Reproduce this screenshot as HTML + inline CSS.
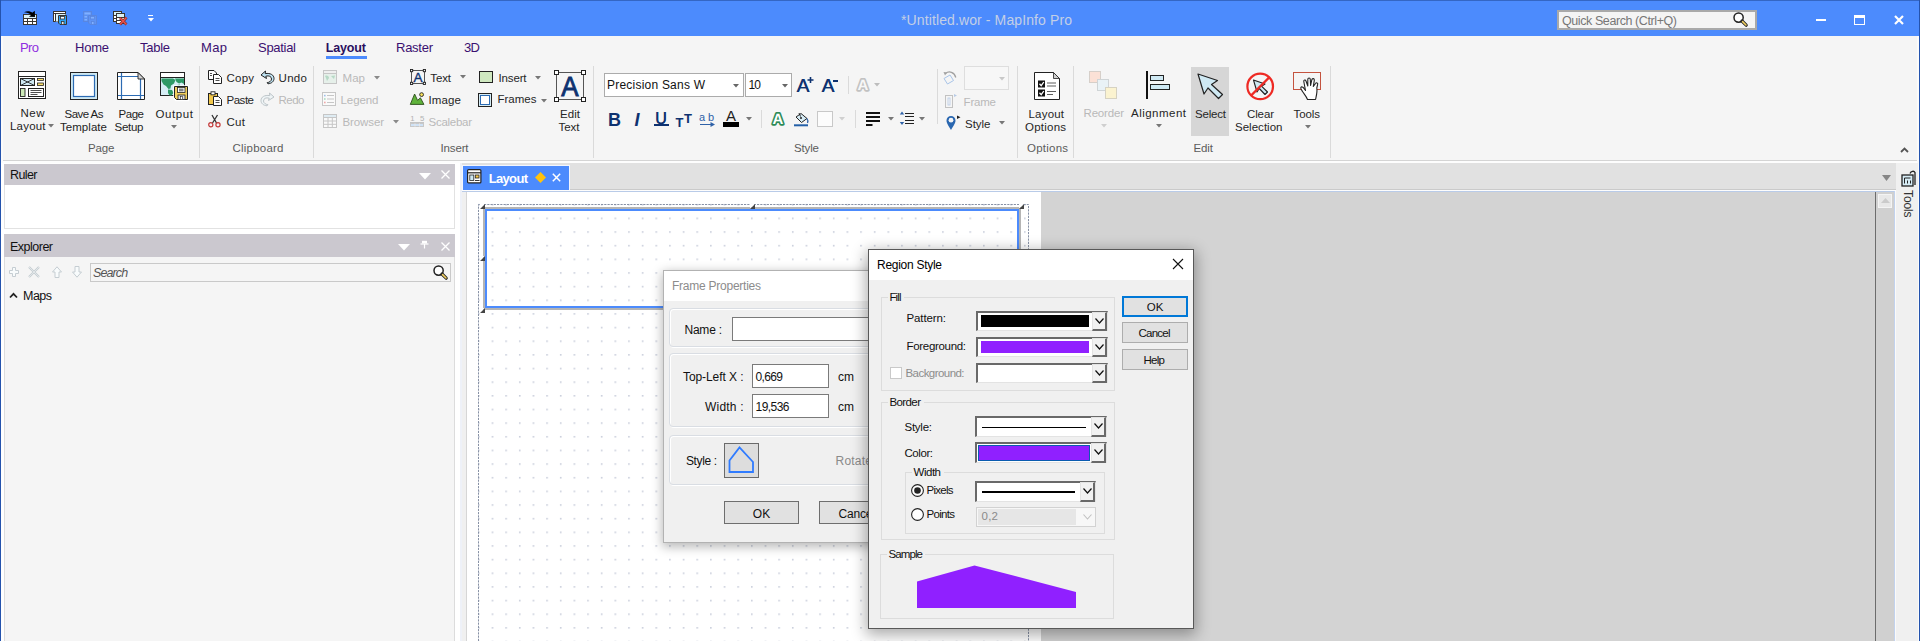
<!DOCTYPE html>
<html lang="en"><head><meta charset="utf-8"><title>*Untitled.wor - MapInfo Pro</title>
<style>
html,body{margin:0;padding:0;}
body{width:1920px;height:641px;overflow:hidden;position:relative;background:#f0f0f0;font-family:"Liberation Sans",Arial,sans-serif;}
.a{position:absolute;box-sizing:border-box;}
.t{position:absolute;white-space:pre;}
svg{overflow:visible;}
</style></head><body>
<div class="a " style="left:0px;top:0px;width:1920px;height:641px;background:#f0f0f0;"></div>
<div class="a " style="left:0px;top:0px;width:1920px;height:36px;background:#4c8bfd;"></div>
<div class="a " style="left:0px;top:0px;width:1920px;height:1px;background:#3466c4;"></div>
<div class="a " style="left:0px;top:36px;width:1920px;height:124px;background:#f5f5f5;"></div>
<div class="a " style="left:0px;top:160px;width:1920px;height:1px;background:#d4d4d4;"></div>
<div class="a " style="left:0px;top:161px;width:1920px;height:2px;background:#fdfdfd;"></div>
<div class="a " style="left:0px;top:0px;width:1px;height:641px;background:#2453ad;"></div>
<div class="a " style="left:1px;top:36px;width:2px;height:605px;background:#fbfbfb;"></div>
<div class="a " style="left:1919px;top:0px;width:1px;height:641px;background:#2453ad;"></div>
<div class="a " style="left:1917px;top:36px;width:2px;height:605px;background:#fbfbfb;"></div>
<span class="t" style="left:901.00px;top:13.00px;font-size:14px;line-height:14px;color:#c3cfe6;letter-spacing:0.113px;">*Untitled.wor - MapInfo Pro</span>
<div class="a " style="left:1557px;top:10px;width:200px;height:20px;background:#f4f4f4;border:2px solid #a9a9a9;"></div>
<span class="t" style="left:1562.00px;top:14.75px;font-size:12.5px;line-height:12.5px;color:#777;letter-spacing:-0.414px;">Quick Search (Ctrl+Q)</span>
<svg class="a" style="left:1733px;top:12px;" width="15" height="15" viewBox="0 0 15 15"><circle cx="5.6" cy="5.6" r="4.6" fill="#fff" stroke="#222" stroke-width="1.5"/><path d="M9 9L13.2 13.2" stroke="#222" stroke-width="3.2" stroke-linecap="round"/><path d="M9.6 9.6L13 13" stroke="#f2d060" stroke-width="1.6" stroke-linecap="round"/></svg>
<div class="a " style="left:1816px;top:19px;width:10px;height:2px;background:#fff;"></div>
<div class="a " style="left:1854px;top:15px;width:11px;height:10px;border:1px solid #fff;border-top:3px solid #fff;"></div>
<svg class="a" style="left:1894px;top:15px;" width="10" height="10" viewBox="0 0 10 10"><path d="M1 1L9 9M9 1L1 9" stroke="#fff" stroke-width="2.2"/></svg>
<svg class="a" style="left:22px;top:10px;" width="16" height="16" viewBox="0 0 16 16"><rect x="1.500" y="4.500" width="13" height="10" fill="#fff" stroke="#3a3530"/><rect x="2" y="5" width="12" height="3" fill="#d9f1f8"/><path d="M1.500 8.500H14.500M1.500 11.500H14.500M5.500 8.500V14.500M10.500 8.500V14.500" stroke="#3a3530"/><path d="M2 2.200C5 .8 8.500 1 10.200 2.800L12.800 .8L13 7L7 6.800L9 5C7.500 3 4.500 2.300 2 2.200Z" fill="#000"/></svg>
<svg class="a" style="left:52px;top:10px;" width="16" height="16" viewBox="0 0 16 16"><rect x="1.500" y="1.500" width="12" height="10" fill="#fff" stroke="#3a3530"/><path d="M1.500 3.500H13.500" stroke="#3a3530"/><rect x="3.500" y="4" width="10" height="7.500" fill="#d9f1f8"/><path d="M3.500 3.500V11.500" stroke="#3a3530"/><path d="M6.500 5.500H14.500V14.500H8L6.500 13Z" fill="#2ea3f2" stroke="#3a3530"/><rect x="8.500" y="6.500" width="4" height="2.500" fill="#fff" stroke="#3a3530" stroke-width=".8"/><rect x="9.500" y="11.500" width="2.500" height="3" fill="#e8e8e8" stroke="#3a3530" stroke-width=".8"/></svg>
<svg class="a" style="left:82px;top:10px;" width="16" height="16" viewBox="0 0 16 16"><rect x="1.500" y="1.500" width="8" height="10" fill="#5a90f2" stroke="#5886e0"/><rect x="2.500" y="2.500" width="6" height="2" fill="#80b0ff"/><rect x="2.500" y="6" width="2.500" height="1.500" fill="#80b0ff"/><rect x="2.500" y="9" width="2.500" height="1.500" fill="#80b0ff"/><path d="M6.500 5.500H14.500V14.500H8L6.500 13Z" fill="#5e93f4" stroke="#5886e0"/><rect x="8.500" y="6.500" width="4" height="2.500" fill="#80b0ff" stroke="#5886e0" stroke-width=".8"/><rect x="9.500" y="11.500" width="2.500" height="3" fill="#80b0ff" stroke="#5886e0" stroke-width=".8"/></svg>
<svg class="a" style="left:112px;top:10px;" width="16" height="16" viewBox="0 0 16 16"><rect x="1.500" y="1.500" width="8" height="10" fill="#fff" stroke="#3a3530"/><rect x="2" y="2" width="7" height="3" fill="#d9f1f8"/><path d="M1.500 5.500H9.500M1.500 8.500H9.500M4.500 5.500V11.500" stroke="#3a3530"/><rect x="4.500" y="3.500" width="8" height="10" fill="#fff" stroke="#3a3530"/><rect x="5" y="4" width="7" height="3" fill="#d9f1f8"/><path d="M4.500 7.500H12.500M4.500 10.500H12.500" stroke="#3a3530"/><path d="M8 8L14.500 14.500M14.500 7.500L8 14.500" stroke="#7a2a26" stroke-width="2.600"/><path d="M8 8L14.500 14.500M14.500 7.500L8 14.500" stroke="#e8524c" stroke-width="1.500"/></svg>
<div class="a " style="left:147.7px;top:15px;width:5.6px;height:1.2px;background:#fff;"></div>
<svg class="a" style="left:147.5px;top:18px;" width="6" height="3.5" viewBox="0 0 6 3.5"><path d="M0 0H6L3 3.500Z" fill="#fff"/></svg>
<span class="t" style="left:20.00px;top:41.00px;font-size:13px;line-height:13px;color:#8f2de0;letter-spacing:-0.614px;">Pro</span>
<span class="t" style="left:75.00px;top:41.00px;font-size:13px;line-height:13px;color:#3b1070;letter-spacing:-0.228px;">Home</span>
<span class="t" style="left:140.00px;top:41.00px;font-size:13px;line-height:13px;color:#3b1070;letter-spacing:-0.271px;">Table</span>
<span class="t" style="left:201.00px;top:41.00px;font-size:13px;line-height:13px;color:#3b1070;letter-spacing:0.357px;">Map</span>
<span class="t" style="left:258.00px;top:41.00px;font-size:13px;line-height:13px;color:#3b1070;letter-spacing:-0.292px;">Spatial</span>
<span class="t" style="left:325.80px;top:41.75px;font-size:12.5px;line-height:12.5px;color:#2a0f5e;letter-spacing:-0.155px;font-weight:bold;">Layout</span>
<div class="a " style="left:326px;top:56px;width:41px;height:3px;background:#4c8bfd;"></div>
<span class="t" style="left:396.00px;top:41.00px;font-size:13px;line-height:13px;color:#3b1070;letter-spacing:-0.257px;">Raster</span>
<span class="t" style="left:464.00px;top:41.00px;font-size:13px;line-height:13px;color:#3b1070;letter-spacing:-0.614px;">3D</span>
<svg class="a" style="left:1900px;top:147px;" width="9" height="6" viewBox="0 0 9 6"><path d="M1 5L4.5 1.5L8 5" fill="none" stroke="#555" stroke-width="1.8"/></svg>
<svg class="a" style="left:18px;top:71px;" width="28" height="28" viewBox="0 0 28 28"><rect x=".5" y=".5" width="27" height="27" fill="#fff" stroke="#222"/><path d="M.5 5.500H27.500" stroke="#222"/>
<rect x="2.500" y="7.500" width="14" height="7" fill="#cfe9f3" stroke="#222"/><path d="M2.500 7.500L16.500 14.500M16.500 7.500L2.500 14.500" stroke="#222" stroke-width=".9"/>
<rect x="19.500" y="7.500" width="6" height="2" fill="#fadf6e" stroke="#222" stroke-width=".8"/><rect x="19.500" y="12" width="6" height="2.500" fill="#fadf6e" stroke="#222" stroke-width=".8"/>
<rect x="2.500" y="17.500" width="4.500" height="8" fill="#cdeab8" stroke="#222" stroke-width=".9"/>
<rect x="10.500" y="17.500" width="15" height="8" fill="#fff" stroke="#222"/><path d="M12.500 19.500H23.500M12.500 21.500H23.500M12.500 23.500H19.500" stroke="#222" stroke-width=".8"/></svg>
<span class="t" style="left:20.50px;top:108.25px;font-size:11.5px;line-height:11.5px;color:#1e1e1e;letter-spacing:0.483px;">New</span>
<span class="t" style="left:10.00px;top:121.25px;font-size:11.5px;line-height:11.5px;color:#1e1e1e;letter-spacing:0.195px;">Layout</span>
<svg class="a" style="left:47.5px;top:124.25px;" width="6" height="3.5" viewBox="0 0 6 3.5"><path d="M0 0H6L3 3.5Z" fill="#777"/></svg>
<svg class="a" style="left:70px;top:72px;" width="28" height="28" viewBox="0 0 28 28"><rect x=".5" y=".5" width="27" height="27" fill="#cfe9f3" stroke="#222"/><rect x="3.5" y="3.5" width="21" height="21" fill="#fff" stroke="#2c6bb3" stroke-width="1.2"/></svg>
<span class="t" style="left:64.50px;top:109.25px;font-size:11.5px;line-height:11.5px;color:#1e1e1e;letter-spacing:-0.532px;">Save As</span>
<span class="t" style="left:60.00px;top:121.75px;font-size:11.5px;line-height:11.5px;color:#1e1e1e;letter-spacing:0.048px;">Template</span>
<svg class="a" style="left:117px;top:72px;" width="28" height="28" viewBox="0 0 28 28"><path d="M.5 .5H21L27.5 7V27.5H.5Z" fill="#fff"/><path d="M4.5 1V27M23.5 7V27M1 4.5H21M1 23.5H27" stroke="#2c6bb3" stroke-width="1.2"/><path d="M.5 .5H21L27.5 7V27.5H.5Z" fill="none" stroke="#222"/><path d="M21 .5V7H27.5Z" fill="#d4d4d4" stroke="#222" stroke-width=".9" stroke-linejoin="round"/></svg>
<span class="t" style="left:118.50px;top:109.25px;font-size:11.5px;line-height:11.5px;color:#1e1e1e;letter-spacing:-0.451px;">Page</span>
<span class="t" style="left:114.50px;top:121.75px;font-size:11.5px;line-height:11.5px;color:#1e1e1e;letter-spacing:-0.262px;">Setup</span>
<svg class="a" style="left:160px;top:72px;" width="29" height="29" viewBox="0 0 29 29"><rect x=".5" y=".5" width="24" height="23" fill="#d6eef5" stroke="#222"/><rect x="1" y="1" width="23" height="4.500" fill="#fff"/><path d="M.5 5.500H24.500" stroke="#222"/>
<path d="M1.500 6.500H13L15.500 8L14 11.500L11 13.500L10.500 16.500L8.500 17L6 14L3.500 12.500L1.500 9Z" fill="#2e9a66"/><path d="M15 6.500H24V12L21.500 10.500L19 11.500L16.500 10Z" fill="#2e9a66"/><path d="M8 17.500L12 18L13.500 21L11.500 23.500H9.500L8 21Z" fill="#2e9a66"/><path d="M17 13L20 12.500L19.500 14.500Z" fill="#2e9a66"/>
<path d="M14 14H28.500V28.500H16L14 26.500Z" fill="#fff" stroke="#fff" stroke-width="1.500"/>
<path d="M14.500 14.500H27.500V27.500H16.500L14.500 25.500Z" fill="#f2d060" stroke="#222"/><rect x="17.500" y="15.500" width="7.500" height="5" fill="#fff" stroke="#222" stroke-width=".8"/><path d="M19 17.200H23.500M19 18.800H23.500" stroke="#222" stroke-width=".8"/><rect x="18" y="23" width="7" height="4.500" fill="#ddd" stroke="#222" stroke-width=".8"/><rect x="20.500" y="24.500" width="2" height="3" fill="#fff" stroke="#222" stroke-width=".6"/></svg>
<span class="t" style="left:155.50px;top:109.25px;font-size:11.5px;line-height:11.5px;color:#1e1e1e;letter-spacing:0.595px;">Output</span>
<svg class="a" style="left:170.5px;top:124.75px;" width="6" height="3.5" viewBox="0 0 6 3.5"><path d="M0 0H6L3 3.5Z" fill="#777"/></svg>
<span class="t" style="left:88.00px;top:143.25px;font-size:11.5px;line-height:11.5px;color:#5c5c5c;letter-spacing:-0.117px;">Page</span>
<div class="a " style="left:199px;top:66px;width:1px;height:92px;background:#dadada;"></div>
<svg class="a" style="left:208px;top:70px;" width="14" height="14" viewBox="0 0 14 14"><path d="M.5 .5H6L8.5 3V9.5H.5Z" fill="#fff" stroke="#222"/><path d="M5.5 4.5H10.5L13.5 7.5V13.5H5.5Z" fill="#fff" stroke="#222"/><path d="M7.5 8.5H11.5M7.5 10.5H11.5M2 3.5H4M2 5.5H4" stroke="#222" stroke-width=".8"/></svg>
<span class="t" style="left:226.50px;top:73.25px;font-size:11.5px;line-height:11.5px;color:#262626;letter-spacing:0.220px;">Copy</span>
<svg class="a" style="left:260px;top:70px;" width="15" height="14" viewBox="0 0 15 14"><path d="M5.5 1L1 5L6.5 8.5L5.8 6.2C9 5.2 11.5 6.5 11.5 9C11.5 11 9.5 12.3 7 12.8L8 13.8C11.5 13.5 14 11.5 14 8.5C14 5 10.5 2.8 5.2 3.6Z" fill="#bfe3f2" stroke="#222" stroke-width="1" stroke-linejoin="round"/></svg>
<span class="t" style="left:278.50px;top:73.25px;font-size:11.5px;line-height:11.5px;color:#262626;letter-spacing:0.334px;">Undo</span>
<svg class="a" style="left:208px;top:91px;" width="14" height="15" viewBox="0 0 14 15"><rect x=".5" y="2.5" width="9" height="11" fill="#f2c84b" stroke="#222"/><rect x="3" y=".8" width="4" height="3" fill="#fff" stroke="#222" stroke-width=".9"/><path d="M5.5 5.5H10.5L13.5 8.5V14.5H5.5Z" fill="#fff" stroke="#222"/><path d="M7.5 9.5H11.5M7.5 11.5H11.5" stroke="#222" stroke-width=".8"/></svg>
<span class="t" style="left:226.50px;top:95.25px;font-size:11.5px;line-height:11.5px;color:#262626;letter-spacing:-0.476px;">Paste</span>
<svg class="a" style="left:260px;top:92px;" width="15" height="14" viewBox="0 0 15 14"><path d="M9.5 1L14 5L8.5 8.5L9.2 6.2C6 5.2 3.5 6.5 3.5 9C3.5 11 5.5 12.3 8 12.8L7 13.8C3.500 13.5 1 11.5 1 8.500C1 5 4.500 2.800 9.800 3.600Z" fill="#eef4f6" stroke="#bcc4c8" stroke-width="1" stroke-linejoin="round"/></svg>
<span class="t" style="left:278.50px;top:95.25px;font-size:11.5px;line-height:11.5px;color:#b9b9b9;letter-spacing:-0.499px;">Redo</span>
<svg class="a" style="left:208px;top:114px;" width="13" height="14" viewBox="0 0 13 14"><path d="M4 1L8.5 9M9.5 1L4.5 9" stroke="#333" stroke-width="1.3" fill="none"/><circle cx="2.8" cy="10.8" r="2.1" fill="none" stroke="#c43b3b" stroke-width="1.2"/><circle cx="10" cy="10.8" r="2.1" fill="none" stroke="#c43b3b" stroke-width="1.2"/></svg>
<span class="t" style="left:226.50px;top:117.25px;font-size:11.5px;line-height:11.5px;color:#262626;letter-spacing:0.303px;">Cut</span>
<span class="t" style="left:232.50px;top:143.25px;font-size:11.5px;line-height:11.5px;color:#5c5c5c;letter-spacing:0.223px;">Clipboard</span>
<div class="a " style="left:313px;top:66px;width:1px;height:92px;background:#dadada;"></div>
<svg class="a" style="left:323px;top:70px;" width="14" height="14" viewBox="0 0 14 14"><rect x=".5" y=".5" width="13" height="13" fill="#e6f0ea" stroke="#c6c6c6"/><rect x=".5" y=".5" width="13" height="3" fill="#efefef" stroke="#c6c6c6"/><path d="M2 6C4 5 6 6 6 8L4 11L3 8Z M8 6L12 5.500L11 9Z" fill="#b7d9c6"/></svg>
<span class="t" style="left:342.50px;top:73.25px;font-size:11.5px;line-height:11.5px;color:#b9b9b9;letter-spacing:0.066px;">Map</span>
<svg class="a" style="left:374px;top:75.75px;" width="6" height="3.5" viewBox="0 0 6 3.5"><path d="M0 0H6L3 3.5Z" fill="#8a8a8a"/></svg>
<svg class="a" style="left:322px;top:92px;" width="14" height="14" viewBox="0 0 14 14"><rect x=".5" y=".5" width="13" height="13" fill="#fafafa" stroke="#c6c6c6"/><path d="M5 3.500H12M5 7H12M5 10.500H12" stroke="#c6c6c6"/><rect x="2" y="2.800" width="1.600" height="1.600" fill="#9fc0ea"/><rect x="2" y="6.200" width="1.600" height="1.600" fill="#a8dcc0"/><rect x="2" y="9.700" width="1.600" height="1.600" fill="#f0a8a8"/></svg>
<span class="t" style="left:340.50px;top:95.25px;font-size:11.5px;line-height:11.5px;color:#b9b9b9;letter-spacing:-0.075px;">Legend</span>
<svg class="a" style="left:323px;top:114px;" width="14" height="14" viewBox="0 0 14 14"><rect x=".5" y=".5" width="13" height="13" fill="#fafafa" stroke="#c6c6c6"/><rect x=".5" y=".5" width="13" height="3" fill="#dfecf3" stroke="#c6c6c6"/><path d="M.5 7H13.500M.5 10.300H13.500M5 3.500V13.500M9.300 3.500V13.500" stroke="#c6c6c6"/></svg>
<span class="t" style="left:342.50px;top:117.25px;font-size:11.5px;line-height:11.5px;color:#b9b9b9;letter-spacing:-0.114px;">Browser</span>
<svg class="a" style="left:392.5px;top:119.75px;" width="6" height="3.5" viewBox="0 0 6 3.5"><path d="M0 0H6L3 3.5Z" fill="#8a8a8a"/></svg>
<svg class="a" style="left:410px;top:69px;" width="16" height="16" viewBox="0 0 16 16"><rect x="1.500" y="1.500" width="13" height="13" fill="none" stroke="#444" stroke-width=".9"/><g fill="#f5f5f5" stroke="#222" stroke-width=".9"><rect x=".5" y=".5" width="2.200" height="2.200"/><rect x="13.300" y=".5" width="2.200" height="2.200"/><rect x=".5" y="13.300" width="2.200" height="2.200"/><rect x="13.300" y="13.300" width="2.200" height="2.200"/></g><text x="8" y="12.800" font-size="13.500" text-anchor="middle" fill="#0e3270" stroke="#0e3270" stroke-width=".35" font-family="Liberation Sans,sans-serif">A</text></svg>
<span class="t" style="left:430.30px;top:73.25px;font-size:11.5px;line-height:11.5px;color:#262626;letter-spacing:-0.130px;">Text</span>
<svg class="a" style="left:459.5px;top:75.25px;" width="6" height="3.5" viewBox="0 0 6 3.5"><path d="M0 0H6L3 3.5Z" fill="#777"/></svg>
<svg class="a" style="left:410px;top:92px;" width="15" height="13" viewBox="0 0 15 13"><path d="M.3 12.400L4.600 2L7.600 8.400L10.400 5.800L13.900 12.400Z" fill="#5fb33a" stroke="#2c4a1c" stroke-width=".9" stroke-linejoin="round"/><circle cx="11.600" cy="2.600" r="1.900" fill="#f8e05a" stroke="#222" stroke-width=".9"/></svg>
<span class="t" style="left:428.50px;top:95.25px;font-size:11.5px;line-height:11.5px;color:#262626;letter-spacing:0.135px;">Image</span>
<svg class="a" style="left:410px;top:114px;" width="15" height="14" viewBox="0 0 15 14"><text x=".2" y="6.800" font-size="7.800" fill="#b2b2b2" font-family="Liberation Sans,sans-serif">1</text><text x="10" y="6.800" font-size="7.800" fill="#b2b2b2" font-family="Liberation Sans,sans-serif">5</text><path d="M0 8.500H14" stroke="#c4c4c4"/><rect x=".5" y="9.500" width="13" height="3" fill="#cfe2f6" stroke="#c8c8c8"/><path d="M5 9.500V12.500M9.500 9.500V12.500" stroke="#e8e8e8"/></svg>
<span class="t" style="left:428.50px;top:117.25px;font-size:11.5px;line-height:11.5px;color:#b9b9b9;letter-spacing:-0.270px;">Scalebar</span>
<svg class="a" style="left:479px;top:71px;" width="14" height="12" viewBox="0 0 14 12"><rect x=".5" y=".5" width="13" height="11" fill="#cfe8c0" stroke="#222"/></svg>
<span class="t" style="left:498.50px;top:73.25px;font-size:11.5px;line-height:11.5px;color:#262626;letter-spacing:-0.152px;">Insert</span>
<svg class="a" style="left:535.3px;top:75.95px;" width="6" height="3.5" viewBox="0 0 6 3.5"><path d="M0 0H6L3 3.5Z" fill="#777"/></svg>
<svg class="a" style="left:478px;top:93px;" width="14" height="14" viewBox="0 0 14 14"><rect x=".5" y=".5" width="13" height="13" fill="#d6ecf5" stroke="#222"/><rect x="2.500" y="2.500" width="9" height="9" fill="#fff" stroke="#2c6bb3"/></svg>
<span class="t" style="left:497.50px;top:94.25px;font-size:11.5px;line-height:11.5px;color:#262626;letter-spacing:0.005px;">Frames</span>
<svg class="a" style="left:540.5px;top:98.75px;" width="6" height="3.5" viewBox="0 0 6 3.5"><path d="M0 0H6L3 3.5Z" fill="#777"/></svg>
<svg class="a" style="left:554px;top:70px;" width="32" height="32" viewBox="0 0 32 32"><rect x="2.500" y="2.500" width="27" height="27" fill="none" stroke="#555"/><g fill="#fff" stroke="#222"><rect x=".5" y=".5" width="4" height="4"/><rect x="27.500" y=".5" width="4" height="4"/><rect x=".5" y="27.500" width="4" height="4"/><rect x="27.500" y="27.500" width="4" height="4"/></g><text x="17.600" y="26" transform="scale(.91 1)" font-size="28.500" text-anchor="middle" fill="#0e3270" stroke="#0e3270" stroke-width=".9" font-family="Liberation Sans,sans-serif">A</text></svg>
<span class="t" style="left:560.09px;top:109.25px;font-size:11.5px;line-height:11.5px;color:#262626;">Edit</span>
<span class="t" style="left:558.45px;top:121.75px;font-size:11.5px;line-height:11.5px;color:#262626;">Text</span>
<span class="t" style="left:440.50px;top:143.25px;font-size:11.5px;line-height:11.5px;color:#5c5c5c;letter-spacing:-0.152px;">Insert</span>
<div class="a " style="left:593px;top:66px;width:1px;height:92px;background:#dadada;"></div>
<div class="a " style="left:604px;top:73px;width:140px;height:24px;background:#fff;border:1px solid #ababab;"></div>
<span class="t" style="left:607.00px;top:79.00px;font-size:12px;line-height:12px;color:#111;letter-spacing:0.220px;">Precision Sans W</span>
<svg class="a" style="left:733px;top:83.75px;" width="6" height="3.5" viewBox="0 0 6 3.5"><path d="M0 0H6L3 3.5Z" fill="#666"/></svg>
<div class="a " style="left:745px;top:73px;width:47px;height:24px;background:#fff;border:1px solid #ababab;"></div>
<span class="t" style="left:748.50px;top:79.00px;font-size:12px;line-height:12px;color:#111;letter-spacing:-0.900px;">10</span>
<svg class="a" style="left:781.5px;top:83.75px;" width="6" height="3.5" viewBox="0 0 6 3.5"><path d="M0 0H6L3 3.5Z" fill="#666"/></svg>
<span class="t" style="left:796.50px;top:76.00px;font-size:19px;line-height:19px;color:#0e3270;text-shadow:.5px 0 0 #0e3270;">A</span>
<svg class="a" style="left:807px;top:77px;" width="7" height="7" viewBox="0 0 7 7"><path d="M3.500 0V6M.5 3H6.500" stroke="#0e3270" stroke-width="1.600"/></svg>
<span class="t" style="left:821.50px;top:76.00px;font-size:19px;line-height:19px;color:#0e3270;text-shadow:.5px 0 0 #0e3270;">A</span>
<div class="a " style="left:833px;top:80px;width:5px;height:1.5px;background:#0e3270;"></div>
<div class="a " style="left:848px;top:76px;width:1px;height:18px;background:#dadada;"></div>
<svg class="a" style="left:855px;top:74.5px;" width="16" height="17" viewBox="0 0 16 17"><g font-size="15" font-weight="bold" text-anchor="middle" text-rendering="geometricPrecision" font-family="Liberation Sans,sans-serif"><text x="8" y="14.500" fill="#c2c2c2" stroke="#c2c2c2" stroke-width="3.300" stroke-linejoin="round">A</text><text x="8" y="14.500" fill="#f7f7f7">A</text></g></svg>
<svg class="a" style="left:874px;top:83.25px;" width="6" height="3.5" viewBox="0 0 6 3.5"><path d="M0 0H6L3 3.5Z" fill="#bdbdbd"/></svg>
<span class="t" style="left:608.00px;top:111.00px;font-size:18px;line-height:18px;color:#0e3270;font-weight:bold;">B</span>
<span class="t" style="left:634.50px;top:111.00px;font-size:18px;line-height:18px;color:#0e3270;font-weight:bold;font-style:italic;">I</span>
<span class="t" style="left:655.00px;top:110.50px;font-size:16px;line-height:16px;color:#0e3270;text-shadow:.4px 0 0 #0e3270;">U</span>
<div class="a " style="left:654px;top:124.3px;width:15px;height:1.5px;background:#0e3270;"></div>
<span class="t" style="left:675.50px;top:115.50px;font-size:13px;line-height:13px;color:#0e3270;font-weight:bold;">T</span>
<span class="t" style="left:684.00px;top:111.50px;font-size:13px;line-height:13px;color:#0e3270;font-weight:bold;">T</span>
<span class="t" style="left:699.00px;top:111.50px;font-size:11px;line-height:11px;color:#2f62a8;">a</span>
<span class="t" style="left:708.00px;top:111.50px;font-size:11px;line-height:11px;color:#2f62a8;">b</span>
<svg class="a" style="left:699px;top:122px;" width="17" height="5" viewBox="0 0 17 5"><path d="M1 2.500H13" stroke="#2f62a8" stroke-width="1"/><path d="M11.500 0L16 2.500L11.500 5Z" fill="#2f62a8"/></svg>
<span class="t" style="left:726.00px;top:108.00px;font-size:15px;line-height:15px;color:#222;">A</span>
<div class="a " style="left:723px;top:122px;width:16px;height:5px;background:#000;"></div>
<svg class="a" style="left:745.5px;top:116.75px;" width="6" height="3.5" viewBox="0 0 6 3.5"><path d="M0 0H6L3 3.5Z" fill="#777"/></svg>
<div class="a " style="left:761px;top:110px;width:1px;height:18px;background:#dadada;"></div>
<svg class="a" style="left:770px;top:109px;" width="16" height="17" viewBox="0 0 16 17"><g font-size="15" font-weight="bold" text-anchor="middle" text-rendering="geometricPrecision" font-family="Liberation Sans,sans-serif"><text x="8" y="14.500" fill="#2c8a57" stroke="#2c8a57" stroke-width="3.300" stroke-linejoin="round">A</text><text x="8" y="14.500" fill="#fff">A</text></g></svg>
<svg class="a" style="left:794px;top:112px;" width="15" height="15" viewBox="0 0 15 15"><path d="M2 5L7 1.500L13 6.500L7.500 10.500Z" fill="#d6ecf5" stroke="#222" stroke-width="1" stroke-linejoin="round"/><circle cx="7" cy="6" r="1" fill="#222"/><path d="M5 1L6.500 4.500" stroke="#222"/><path d="M13 6.500C14 8 14.200 9.500 13.500 11" stroke="#2f62a8" fill="none" stroke-width="1.300"/><path d="M0 13.300H14" stroke="#2460a8" stroke-width="2"/></svg>
<div class="a " style="left:817px;top:111px;width:16px;height:16px;background:#fcfcfc;border:1px solid #c8c8c8;"></div>
<svg class="a" style="left:839px;top:116.75px;" width="6" height="3.5" viewBox="0 0 6 3.5"><path d="M0 0H6L3 3.5Z" fill="#d0d0d0"/></svg>
<div class="a " style="left:855px;top:110px;width:1px;height:18px;background:#dadada;"></div>
<svg class="a" style="left:866px;top:112px;" width="14" height="14" viewBox="0 0 14 14"><path d="M0 1H14M0 5H14M0 9H14M0 13H6.500" stroke="#111" stroke-width="2"/></svg>
<svg class="a" style="left:887.5px;top:116.75px;" width="6" height="3.5" viewBox="0 0 6 3.5"><path d="M0 0H6L3 3.5Z" fill="#777"/></svg>
<svg class="a" style="left:899px;top:111px;" width="15" height="15" viewBox="0 0 15 15"><path d="M6 2.500H15M6 5.500H15M6 9.500H15M6 12.500H15" stroke="#222" stroke-width="1"/><path d="M.800 3.500L3 .5L5.200 3.500Z M.800 11L3 14L5.200 11Z" fill="#2f62a8"/></svg>
<svg class="a" style="left:918.5px;top:116.75px;" width="6" height="3.5" viewBox="0 0 6 3.5"><path d="M0 0H6L3 3.5Z" fill="#777"/></svg>
<span class="t" style="left:794.00px;top:143.25px;font-size:11.5px;line-height:11.5px;color:#5c5c5c;letter-spacing:-0.141px;">Style</span>
<div class="a " style="left:937px;top:69px;width:1px;height:55px;background:#dadada;"></div>
<svg class="a" style="left:942px;top:70px;" width="16" height="16" viewBox="0 0 16 16"><path d="M2 8.500L8 5L11.500 10.500L5.500 14Z" fill="none" stroke="#a8c4e8" stroke-width="1"/><path d="M3.500 3.500C7 .5 12.500 2 13.800 7.500" fill="none" stroke="#a0a0a0" stroke-width="1.300"/><path d="M1.500 2L5 2.500L3 5.500Z" fill="#a0a0a0"/></svg>
<div class="a " style="left:964px;top:66px;width:45px;height:23.5px;background:#f7f7f7;border:1px solid #dedede;"></div>
<svg class="a" style="left:998.5px;top:76.75px;" width="6" height="3.5" viewBox="0 0 6 3.5"><path d="M0 0H6L3 3.5Z" fill="#c8c8c8"/></svg>
<svg class="a" style="left:945px;top:94px;" width="12" height="14" viewBox="0 0 12 14"><rect x=".5" y="1.500" width="7" height="12" fill="none" stroke="#c2c2c2"/><rect x="3" y="4" width="2" height="7" fill="none" stroke="#b8cbe6" stroke-width=".8"/><path d="M9 0L12 1.500L9 3Z" fill="#b8cbe6"/></svg>
<span class="t" style="left:963.60px;top:96.75px;font-size:11.5px;line-height:11.5px;color:#b9b9b9;letter-spacing:-0.206px;">Frame</span>
<svg class="a" style="left:946px;top:115px;" width="15" height="16" viewBox="0 0 15 16"><path d="M5 15C2 10 .5 8 .5 5.500A4.500 4.500 0 0 1 9.500 5.500C9.500 8 8 10 5 15Z" fill="#2a67b0"/><circle cx="5" cy="5.200" r="2.400" fill="#f5f5f5"/><path d="M11 .5L14.500 2.200L11 4Z" fill="#222"/></svg>
<span class="t" style="left:965.00px;top:118.75px;font-size:11.5px;line-height:11.5px;color:#262626;letter-spacing:-0.016px;">Style</span>
<svg class="a" style="left:998.5px;top:121.05px;" width="6" height="3.5" viewBox="0 0 6 3.5"><path d="M0 0H6L3 3.5Z" fill="#777"/></svg>
<div class="a " style="left:1017px;top:66px;width:1px;height:92px;background:#dadada;"></div>
<svg class="a" style="left:1034px;top:71.5px;" width="27" height="28.5" viewBox="0 0 27 28.5"><path d="M.5 .5H19.500L25.500 6.500V27.500H.5Z" fill="#fff" stroke="#222"/><path d="M19.500 .5V6.500H25.500Z" fill="#d0d0d0" stroke="#222" stroke-width=".8"/><rect x="4" y="8.500" width="7" height="7" fill="#111"/><rect x="4" y="17.500" width="7" height="7" fill="#111"/><path d="M5.500 11.800L7.200 13.700L9.800 10M5.500 20.800L7.200 22.700L9.800 19" stroke="#fff" stroke-width="1.300" fill="none"/><path d="M13 11H22M13 14H22M13 19.500H22M13 22.500H19" stroke="#333" stroke-width=".8"/></svg>
<span class="t" style="left:1028.50px;top:109.25px;font-size:11.5px;line-height:11.5px;color:#262626;letter-spacing:0.195px;">Layout</span>
<span class="t" style="left:1025.00px;top:121.75px;font-size:11.5px;line-height:11.5px;color:#262626;letter-spacing:0.229px;">Options</span>
<span class="t" style="left:1027.00px;top:143.25px;font-size:11.5px;line-height:11.5px;color:#5c5c5c;letter-spacing:0.229px;">Options</span>
<div class="a " style="left:1073px;top:66px;width:1px;height:92px;background:#dadada;"></div>
<svg class="a" style="left:1089px;top:71px;" width="28" height="28" viewBox="0 0 28 28"><rect x=".5" y=".5" width="11" height="11" fill="#fbe1d6" stroke="#d6cfc9"/><rect x="8.500" y="8.500" width="11" height="11" fill="#e9f2f6" stroke="#cfd4d6"/><rect x="16.500" y="16.500" width="11" height="11" fill="#fbf3d0" stroke="#d6d2c2"/></svg>
<span class="t" style="left:1083.50px;top:108.25px;font-size:11.5px;line-height:11.5px;color:#b9b9b9;letter-spacing:-0.175px;">Reorder</span>
<svg class="a" style="left:1100.5px;top:123.75px;" width="6" height="3.5" viewBox="0 0 6 3.5"><path d="M0 0H6L3 3.5Z" fill="#cfcfcf"/></svg>
<svg class="a" style="left:1146px;top:71px;" width="25" height="28" viewBox="0 0 25 28"><path d="M1 0V28" stroke="#111" stroke-width="2"/><rect x="4.500" y="4.500" width="13" height="5" fill="#cfe9f3" stroke="#222"/><rect x="4.500" y="13.500" width="19" height="5" fill="#cfe9f3" stroke="#222"/></svg>
<span class="t" style="left:1131.00px;top:108.25px;font-size:11.5px;line-height:11.5px;color:#262626;letter-spacing:0.482px;">Alignment</span>
<svg class="a" style="left:1155.5px;top:123.75px;" width="6" height="3.5" viewBox="0 0 6 3.5"><path d="M0 0H6L3 3.5Z" fill="#777"/></svg>
<div class="a " style="left:1191px;top:67px;width:38px;height:69px;background:#d6d6d6;"></div>
<svg class="a" style="left:1197px;top:73px;" width="27" height="27" viewBox="0 0 27 27"><path d="M1 1L20.500 7.500L14.500 11.500L25.500 21.500L21.500 25.500L11 15L7 21Z" fill="#cfe9f3" stroke="#222" stroke-width="1.200" stroke-linejoin="round"/></svg>
<span class="t" style="left:1195.00px;top:109.25px;font-size:11.5px;line-height:11.5px;color:#262626;letter-spacing:-0.192px;">Select</span>
<svg class="a" style="left:1246px;top:71.5px;" width="28" height="28" viewBox="0 0 28 28"><path d="M7.500 8L19 12L15.500 14.200L21.500 20L19 22.500L13.300 16.500L11 20Z" fill="#cfe9f3" stroke="#222" stroke-width="1.100" stroke-linejoin="round"/><circle cx="14.200" cy="14.400" r="12.800" fill="none" stroke="#ee2a24" stroke-width="2.200"/><path d="M5.200 23.400L23.200 5.400" stroke="#ee2a24" stroke-width="2.200"/></svg>
<span class="t" style="left:1247.00px;top:109.25px;font-size:11.5px;line-height:11.5px;color:#262626;letter-spacing:-0.121px;">Clear</span>
<span class="t" style="left:1235.00px;top:121.75px;font-size:11.5px;line-height:11.5px;color:#262626;letter-spacing:0.024px;">Selection</span>
<div class="a " style="left:1293px;top:72px;width:28px;height:17.5px;border:1px solid #c4533f;"></div>
<svg class="a" style="left:1300px;top:76px;" width="20" height="25" viewBox="0 0 20 25"><path d="M.8 11.500C1.500 10.500 3 10.800 4 12.500L5.500 14.500L3.800 5.500C3.500 3.800 5.500 3.300 6 5L7.800 10L7.800 3.500C7.800 1.500 10.300 1.500 10.300 3.500L10.600 9.500L11.800 3.800C12.200 2 14.600 2.400 14.300 4.300L13.300 10.500L15.500 7.500C16.300 6 18.300 7 17.600 8.600L16.800 12C17.500 16 16.500 19 15.500 23.500L7.500 23.500C6.500 20.500 4 18 2.500 15.500C1.500 14 .3 12.500 .8 11.500Z" fill="#fff" stroke="#222" stroke-width="1.100" stroke-linejoin="round"/></svg>
<span class="t" style="left:1293.50px;top:109.25px;font-size:11.5px;line-height:11.5px;color:#262626;letter-spacing:-0.085px;">Tools</span>
<svg class="a" style="left:1304.5px;top:124.75px;" width="6" height="3.5" viewBox="0 0 6 3.5"><path d="M0 0H6L3 3.5Z" fill="#777"/></svg>
<span class="t" style="left:1193.50px;top:143.25px;font-size:11.5px;line-height:11.5px;color:#5c5c5c;letter-spacing:-0.105px;">Edit</span>
<div class="a " style="left:1330px;top:66px;width:1px;height:92px;background:#dadada;"></div>
<div class="a " style="left:1px;top:163px;width:459px;height:478px;background:#fff;"></div>
<div class="a " style="left:4px;top:164px;width:451px;height:21px;background:#cbc8cf;"></div>
<span class="t" style="left:10.00px;top:168.75px;font-size:12.5px;line-height:12.5px;color:#111;letter-spacing:-0.594px;">Ruler</span>
<div class="a " style="left:4px;top:185px;width:451px;height:44px;background:#fff;border:1px solid #e2e2e2;border-top:none;"></div>
<svg class="a" style="left:418.5px;top:173px;" width="12" height="7" viewBox="0 0 12 7"><path d="M0 0H12L6 6.500Z" fill="#fff"/></svg>
<svg class="a" style="left:440.5px;top:170px;" width="9" height="9" viewBox="0 0 9 9"><path d="M.5 .5L8.500 8.500M8.500 .5L.5 8.500" stroke="#fff" stroke-width="1.300"/></svg>
<div class="a " style="left:4px;top:234px;width:451px;height:23px;background:#cbc8cf;"></div>
<span class="t" style="left:10.00px;top:240.75px;font-size:12.5px;line-height:12.5px;color:#111;letter-spacing:-0.507px;">Explorer</span>
<div class="a " style="left:4px;top:257px;width:451px;height:384px;background:#f5f5f5;border:1px solid #dcdcdc;border-top:none;border-bottom:none;"></div>
<svg class="a" style="left:397.5px;top:244px;" width="12" height="7" viewBox="0 0 12 7"><path d="M0 0H12L6 6.500Z" fill="#fff"/></svg>
<svg class="a" style="left:420px;top:240px;" width="9" height="9" viewBox="0 0 9 9"><path d="M2 .8H7V3.500H2Z" fill="#fff"/><path d="M.5 4H8.500" stroke="#fff" stroke-width="1.200"/><path d="M4.500 4V8.500" stroke="#fff" stroke-width="1.200"/></svg>
<svg class="a" style="left:440.5px;top:242px;" width="9" height="9" viewBox="0 0 9 9"><path d="M.5 .5L8.500 8.500M8.500 .5L.5 8.500" stroke="#fff" stroke-width="1.300"/></svg>
<svg class="a" style="left:9px;top:267px;" width="10" height="10" viewBox="0 0 10 10"><path d="M3.500 .5H6.500V3.500H9.500V6.500H6.500V9.500H3.500V6.500H.5V3.500H3.500Z" fill="#f8fbfc" stroke="#c5cdd2"/></svg>
<svg class="a" style="left:28px;top:266px;" width="12" height="12" viewBox="0 0 12 12"><path d="M1 1L11 11M11 1L1 11" stroke="#c5cdd2" stroke-width="2.200"/><path d="M1 1L11 11M11 1L1 11" stroke="#f3f6f7" stroke-width=".6"/></svg>
<svg class="a" style="left:52px;top:266px;" width="10" height="12" viewBox="0 0 10 12"><path d="M5 .8L9.500 6H7V11.500H3V6H.5Z" fill="#f8fbfc" stroke="#c5cdd2"/></svg>
<svg class="a" style="left:72px;top:266px;" width="10" height="12" viewBox="0 0 10 12"><path d="M5 11.200L9.500 6H7V.5H3V6H.5Z" fill="#f8fbfc" stroke="#c5cdd2"/></svg>
<div class="a " style="left:90px;top:263px;width:361px;height:19px;background:#f5f5f5;border:1px solid #c9c9c9;"></div>
<span class="t" style="left:93.00px;top:266.75px;font-size:12.5px;line-height:12.5px;color:#555;letter-spacing:-0.900px;font-style:italic;">Search</span>
<svg class="a" style="left:433px;top:265px;" width="15" height="15" viewBox="0 0 15 15"><circle cx="5.6" cy="5.6" r="4.6" fill="#fff" stroke="#222" stroke-width="1.5"/><path d="M9 9L13.2 13.2" stroke="#222" stroke-width="3.2" stroke-linecap="round"/><path d="M9.6 9.6L13 13" stroke="#f2d060" stroke-width="1.6" stroke-linecap="round"/></svg>
<svg class="a" style="left:9px;top:292px;" width="9" height="7" viewBox="0 0 9 7"><path d="M1 5.500L4.500 1.800L8 5.500" fill="none" stroke="#222" stroke-width="1.800"/></svg>
<span class="t" style="left:23.00px;top:289.75px;font-size:12.5px;line-height:12.5px;color:#111;letter-spacing:-0.521px;">Maps</span>
<div class="a " style="left:455px;top:163px;width:5px;height:478px;background:#fff;"></div>
<div class="a " style="left:460px;top:163px;width:2px;height:478px;background:#eef1f8;"></div>
<div class="a " style="left:462px;top:163px;width:1434px;height:26px;background:#e1e1e1;"></div>
<div class="a " style="left:462px;top:189px;width:1434px;height:1px;background:#cacaca;"></div>
<div class="a " style="left:462px;top:190px;width:1434px;height:1px;background:#fdfdfd;"></div>
<div class="a " style="left:462px;top:191px;width:1434px;height:1px;background:#b9cbe8;"></div>
<div class="a " style="left:462px;top:165px;width:108px;height:25px;background:#f2f6ff;"></div>
<div class="a " style="left:463px;top:166px;width:106px;height:24px;background:#4c8bfd;"></div>
<svg class="a" style="left:467px;top:169px;" width="15" height="15" viewBox="0 0 15 15"><rect x=".6" y=".6" width="13.300" height="13.300" rx="1" fill="#fff" stroke="#222" stroke-width="1.200"/><path d="M1 3.800H14" stroke="#222" stroke-width="1.200"/><rect x="2.800" y="6" width="4" height="5.500" fill="#cfe9f3" stroke="#222" stroke-width=".8"/><rect x="8.300" y="6" width="3.700" height="3" fill="#f5c84a" stroke="#222" stroke-width=".8"/><path d="M8 11.500H12.500" stroke="#222" stroke-width=".9"/></svg>
<span class="t" style="left:488.70px;top:172.00px;font-size:13px;line-height:13px;color:#fff;letter-spacing:-0.663px;font-weight:bold;">Layout</span>
<svg class="a" style="left:535px;top:172px;" width="11" height="11" viewBox="0 0 11 11"><path d="M5.500 0L11 5.500L5.500 11L0 5.500Z" fill="#ffc20e"/></svg>
<svg class="a" style="left:552px;top:173px;" width="9" height="9" viewBox="0 0 9 9"><path d="M.8 .8L8.200 8.200M8.200 .8L.8 8.200" stroke="#fff" stroke-width="1.500"/></svg>
<svg class="a" style="left:1882px;top:175px;" width="9" height="6" viewBox="0 0 9 6"><path d="M0 0H9L4.500 6Z" fill="#868686"/></svg>
<div class="a " style="left:462px;top:192px;width:5px;height:449px;background:#f0f0f0;"></div>
<div class="a " style="left:466px;top:192px;width:1px;height:449px;background:#d6d6d6;"></div>
<div class="a " style="left:467px;top:192px;width:1427px;height:449px;background:#d3d3d3;"></div>
<div class="a " style="left:467px;top:192px;width:574px;height:449px;background:#fff;"></div>
<svg class="a" style="left:477px;top:203px" width="554" height="438"><defs><pattern id="gd" x="1.000" y="0.900" width="13.650" height="13.650" patternUnits="userSpaceOnUse"><rect x="0" y="0" width="1.600" height="1.600" fill="#c9cedb"/></pattern></defs><rect width="554" height="438" fill="url(#gd)"/></svg>
<svg class="a" style="left:478px;top:204px" width="552" height="437"><path d="M.5 437V.5H550.500V437" fill="none" stroke="#8791a5" stroke-width="1" stroke-dasharray="2.200 1.050"/></svg>
<div class="a " style="left:483px;top:207px;width:538px;height:103px;background:#b4b4b4;"></div>
<div class="a " style="left:485px;top:209px;width:534px;height:99px;background:#4c8bfd;"></div>
<div class="a " style="left:487px;top:211px;width:530px;height:95px;background:#fff;"></div>
<svg class="a" style="left:487px;top:211px" width="530" height="95"><defs><pattern id="gd2" x="-9.000" y="-7.100" width="13.650" height="13.650" patternUnits="userSpaceOnUse"><rect x="0" y="0" width="1.600" height="1.600" fill="#c9cedb"/></pattern></defs><rect width="530" height="95" fill="url(#gd2)"/></svg>
<svg class="a" style="left:480px;top:204px;" width="5" height="5" viewBox="0 0 5 5"><path d="M5 0V5H0Z" fill="#444"/><path d="M0 0H4.500L0 4.500Z" fill="#fff"/></svg>
<svg class="a" style="left:480px;top:256px;" width="5" height="5" viewBox="0 0 5 5"><path d="M5 0V5H0Z" fill="#444"/><path d="M0 0H4.500L0 4.500Z" fill="#fff"/></svg>
<svg class="a" style="left:480px;top:308px;" width="5" height="5" viewBox="0 0 5 5"><path d="M5 0V5H0Z" fill="#444"/><path d="M0 0H4.500L0 4.500Z" fill="#fff"/></svg>
<svg class="a" style="left:750px;top:204px;" width="5" height="5" viewBox="0 0 5 5"><path d="M5 0V5H0Z" fill="#444"/><path d="M0 0H4.500L0 4.500Z" fill="#fff"/></svg>
<svg class="a" style="left:1019px;top:204px;" width="5" height="5" viewBox="0 0 5 5"><path d="M5 0V5H0Z" fill="#444"/><path d="M0 0H4.500L0 4.500Z" fill="#fff"/></svg>
<div class="a " style="left:1875px;top:192px;width:1px;height:449px;background:#6c6c6c;"></div>
<div class="a " style="left:1876px;top:192px;width:18px;height:449px;background:#d0d0d0;"></div>
<div class="a " style="left:1878px;top:194px;width:14px;height:14px;background:#e8e8e8;border:1px solid #f4f4f4;"></div>
<svg class="a" style="left:1880.5px;top:198px;" width="9" height="5" viewBox="0 0 9 5"><path d="M0 5L4.500 0L9 5Z" fill="#cbcbcb"/></svg>
<div class="a " style="left:1894px;top:191px;width:1px;height:450px;background:#c2d2ee;"></div>
<div class="a " style="left:1895px;top:191px;width:1px;height:450px;background:#fafafa;"></div>
<div class="a " style="left:1896px;top:163px;width:22px;height:478px;background:#f0f0f0;"></div>
<svg class="a" style="left:1901px;top:170px;" width="15" height="17" viewBox="0 0 15 17"><rect x="1" y="5" width="11" height="11" fill="#d6ecf5" stroke="#222" stroke-width="1.300"/><path d="M3.500 8H9.500M3.500 8V13.500M6.500 10.500V13.500M9.500 10.500V13.500" stroke="#222" stroke-width="1"/><path d="M9 3.500C10 1 13 .5 14 2.500V15" fill="none" stroke="#222" stroke-width="1.300"/></svg>
<span class="t" style="left:1901px;top:190px;font-size:12px;line-height:13px;color:#333;writing-mode:vertical-rl;letter-spacing:-0.1px;">Tools</span>
<div class="a " style="left:663px;top:270px;width:241px;height:273px;background:#f0f0f0;border:1px solid #b2b2b2;box-shadow:0 3px 10px 1px rgba(0,0,0,.28);"></div>
<div class="a " style="left:664px;top:271px;width:239px;height:30px;background:#fff;"></div>
<span class="t" style="left:672.00px;top:280.00px;font-size:12px;line-height:12px;color:#8c8c8c;letter-spacing:-0.247px;">Frame Properties</span>
<div class="a " style="left:669px;top:308px;width:230px;height:39px;border:1px solid #d9dde3;border-radius:4px;box-shadow:inset 1px 1px 0 #fff, 1px 1px 0 #fff;"></div>
<span class="t" style="left:684.50px;top:324.00px;font-size:12px;line-height:12px;color:#111;letter-spacing:-0.235px;">Name :</span>
<div class="a " style="left:732px;top:317px;width:160px;height:24px;background:#fff;border:1px solid #7a7a7a;"></div>
<div class="a " style="left:669px;top:353px;width:230px;height:74px;border:1px solid #d9dde3;border-radius:4px;box-shadow:inset 1px 1px 0 #fff, 1px 1px 0 #fff;"></div>
<span class="t" style="left:683.00px;top:371.00px;font-size:12px;line-height:12px;color:#111;letter-spacing:-0.079px;">Top-Left X :</span>
<div class="a " style="left:752px;top:364px;width:77px;height:24px;background:#fff;border:1px solid #7a7a7a;"></div>
<span class="t" style="left:755.50px;top:371.00px;font-size:12px;line-height:12px;color:#111;letter-spacing:-0.631px;">0,669</span>
<span class="t" style="left:838.00px;top:371.00px;font-size:12px;line-height:12px;color:#111;letter-spacing:0.004px;">cm</span>
<span class="t" style="left:705.00px;top:401.00px;font-size:12px;line-height:12px;color:#111;letter-spacing:0.193px;">Width :</span>
<div class="a " style="left:752px;top:394px;width:77px;height:24px;background:#fff;border:1px solid #7a7a7a;"></div>
<span class="t" style="left:755.50px;top:401.00px;font-size:12px;line-height:12px;color:#111;letter-spacing:-0.542px;">19,536</span>
<span class="t" style="left:838.00px;top:401.00px;font-size:12px;line-height:12px;color:#111;letter-spacing:0.004px;">cm</span>
<div class="a " style="left:669px;top:435px;width:230px;height:50px;border:1px solid #d9dde3;border-radius:4px;box-shadow:inset 1px 1px 0 #fff, 1px 1px 0 #fff;"></div>
<span class="t" style="left:686.00px;top:455.00px;font-size:12px;line-height:12px;color:#111;letter-spacing:-0.391px;">Style :</span>
<div class="a " style="left:724px;top:443px;width:35px;height:35px;background:#dddddd;border:1px solid #6a6a6a;"></div>
<svg class="a" style="left:724px;top:443px;" width="35" height="35" viewBox="0 0 35 35"><path d="M5.500 29V17.500L15.500 4.500L29 19V29Z" fill="none" stroke="#2f7bff" stroke-width="1.800" stroke-linejoin="miter"/></svg>
<span class="t" style="left:835.50px;top:455.00px;font-size:12px;line-height:12px;color:#8a8a8a;letter-spacing:0.230px;">Rotate</span>
<div class="a " style="left:724px;top:501px;width:75px;height:23px;background:#e1e1e1;border:1px solid #6e6e6e;"></div>
<span class="t" style="left:752.83px;top:507.50px;font-size:12px;line-height:12px;color:#111;">OK</span>
<div class="a " style="left:819px;top:501px;width:75px;height:23px;background:#e1e1e1;border:1px solid #6e6e6e;"></div>
<span class="t" style="left:838.50px;top:507.50px;font-size:12px;line-height:12px;color:#111;letter-spacing:-0.171px;">Cancel</span>
<div class="a " style="left:868px;top:249px;width:326px;height:380px;background:#f0f0f0;border:1px solid #585858;box-shadow:0 4px 14px 2px rgba(0,0,0,.33);"></div>
<div class="a " style="left:869px;top:250px;width:324px;height:30px;background:#fff;"></div>
<span class="t" style="left:877.00px;top:259.00px;font-size:12px;line-height:12px;color:#000;letter-spacing:-0.276px;">Region Style</span>
<svg class="a" style="left:1173px;top:259px;" width="10" height="10" viewBox="0 0 10 10"><path d="M0 0L10 10M10 0L0 10" stroke="#111" stroke-width="1.100"/></svg>
<div class="a " style="left:881px;top:297px;width:234px;height:94px;border:1px solid #dcdcdc;"></div>
<div class="a " style="left:887.5px;top:295px;width:16.5px;height:5px;background:#f0f0f0;"></div>
<span class="t" style="left:889.50px;top:292.25px;font-size:11.5px;line-height:11.5px;color:#111;letter-spacing:-0.900px;">Fill</span>
<span class="t" style="left:906.50px;top:313.25px;font-size:11.5px;line-height:11.5px;color:#111;letter-spacing:-0.110px;">Pattern:</span>
<div class="a " style="left:976px;top:311px;width:132px;height:20px;background:#fff;border-top:2px solid #696969;border-left:2px solid #696969;border-bottom:1px solid #e3e3e3;border-right:1px solid #e3e3e3;"></div>
<div class="a " style="left:1092px;top:312px;width:15px;height:19px;background:#f1f1f1;border-top:1px solid #e3e3e3;border-left:1px solid #e3e3e3;border-bottom:2px solid #696969;border-right:2px solid #696969;"></div>
<svg class="a" style="left:1094.5px;top:317.5px;" width="9" height="6" viewBox="0 0 9 6"><path d="M.5 .5L4.500 5L8.500 .5" fill="none" stroke="#111" stroke-width="1.200"/></svg>
<div class="a " style="left:981px;top:315px;width:108px;height:12px;background:#000;"></div>
<span class="t" style="left:906.50px;top:341.25px;font-size:11.5px;line-height:11.5px;color:#111;letter-spacing:-0.315px;">Foreground:</span>
<div class="a " style="left:976px;top:337px;width:132px;height:20px;background:#fff;border-top:2px solid #696969;border-left:2px solid #696969;border-bottom:1px solid #e3e3e3;border-right:1px solid #e3e3e3;"></div>
<div class="a " style="left:1092px;top:338px;width:15px;height:19px;background:#f1f1f1;border-top:1px solid #e3e3e3;border-left:1px solid #e3e3e3;border-bottom:2px solid #696969;border-right:2px solid #696969;"></div>
<svg class="a" style="left:1094.5px;top:343.5px;" width="9" height="6" viewBox="0 0 9 6"><path d="M.5 .5L4.500 5L8.500 .5" fill="none" stroke="#111" stroke-width="1.200"/></svg>
<div class="a " style="left:981px;top:341px;width:108px;height:12px;background:#9020ff;"></div>
<div class="a " style="left:890px;top:367px;width:12px;height:12px;background:#fff;border:1px solid #c9c9c9;"></div>
<span class="t" style="left:905.50px;top:368.25px;font-size:11.5px;line-height:11.5px;color:#8c8c8c;letter-spacing:-0.557px;">Background:</span>
<div class="a " style="left:976px;top:363px;width:132px;height:20px;background:#fff;border-top:2px solid #696969;border-left:2px solid #696969;border-bottom:1px solid #e3e3e3;border-right:1px solid #e3e3e3;"></div>
<div class="a " style="left:1092px;top:364px;width:15px;height:19px;background:#f1f1f1;border-top:1px solid #e3e3e3;border-left:1px solid #e3e3e3;border-bottom:2px solid #696969;border-right:2px solid #696969;"></div>
<svg class="a" style="left:1094.5px;top:369.5px;" width="9" height="6" viewBox="0 0 9 6"><path d="M.5 .5L4.500 5L8.500 .5" fill="none" stroke="#111" stroke-width="1.200"/></svg>
<div class="a " style="left:1122px;top:296px;width:66px;height:21px;background:#e1e1e1;border:2px solid #0078d7;"></div>
<span class="t" style="left:1146.69px;top:302.25px;font-size:11.5px;line-height:11.5px;color:#111;">OK</span>
<div class="a " style="left:1122px;top:322px;width:66px;height:21px;background:#e1e1e1;border:1px solid #adadad;"></div>
<span class="t" style="left:1138.50px;top:327.75px;font-size:11.5px;line-height:11.5px;color:#111;letter-spacing:-0.760px;">Cancel</span>
<div class="a " style="left:1122px;top:349px;width:66px;height:21px;background:#e1e1e1;border:1px solid #adadad;"></div>
<span class="t" style="left:1143.50px;top:354.75px;font-size:11.5px;line-height:11.5px;color:#111;letter-spacing:-0.719px;">Help</span>
<div class="a " style="left:881px;top:402px;width:234px;height:138px;border:1px solid #dcdcdc;"></div>
<div class="a " style="left:887.5px;top:400px;width:36.5px;height:5px;background:#f0f0f0;"></div>
<span class="t" style="left:889.50px;top:397.25px;font-size:11.5px;line-height:11.5px;color:#111;letter-spacing:-0.605px;">Border</span>
<span class="t" style="left:904.50px;top:422.25px;font-size:11.5px;line-height:11.5px;color:#111;letter-spacing:-0.252px;">Style:</span>
<div class="a " style="left:975px;top:416px;width:132px;height:21px;background:#fff;border-top:2px solid #696969;border-left:2px solid #696969;border-bottom:1px solid #e3e3e3;border-right:1px solid #e3e3e3;"></div>
<div class="a " style="left:1091px;top:417px;width:15px;height:20px;background:#f1f1f1;border-top:1px solid #e3e3e3;border-left:1px solid #e3e3e3;border-bottom:2px solid #696969;border-right:2px solid #696969;"></div>
<svg class="a" style="left:1093.5px;top:423px;" width="9" height="6" viewBox="0 0 9 6"><path d="M.5 .5L4.500 5L8.500 .5" fill="none" stroke="#111" stroke-width="1.200"/></svg>
<div class="a " style="left:982px;top:427px;width:104px;height:1px;background:#000;"></div>
<span class="t" style="left:904.50px;top:448.25px;font-size:11.5px;line-height:11.5px;color:#111;letter-spacing:-0.436px;">Color:</span>
<div class="a " style="left:975px;top:442px;width:132px;height:21px;background:#fff;border-top:2px solid #696969;border-left:2px solid #696969;border-bottom:1px solid #e3e3e3;border-right:1px solid #e3e3e3;"></div>
<div class="a " style="left:1091px;top:443px;width:15px;height:20px;background:#f1f1f1;border-top:1px solid #e3e3e3;border-left:1px solid #e3e3e3;border-bottom:2px solid #696969;border-right:2px solid #696969;"></div>
<svg class="a" style="left:1093.5px;top:449px;" width="9" height="6" viewBox="0 0 9 6"><path d="M.5 .5L4.500 5L8.500 .5" fill="none" stroke="#111" stroke-width="1.200"/></svg>
<div class="a " style="left:978px;top:445px;width:112px;height:16px;background:#9020ff;border:1px solid #0b5cb0;box-shadow:0 0 0 1px #fff;"></div>
<div class="a " style="left:905px;top:472px;width:200px;height:62px;border:1px solid #dcdcdc;"></div>
<div class="a " style="left:911.5px;top:470px;width:32.5px;height:5px;background:#f0f0f0;"></div>
<span class="t" style="left:913.50px;top:467.25px;font-size:11.5px;line-height:11.5px;color:#111;letter-spacing:-0.473px;">Width</span>
<svg class="a" style="left:911px;top:483.5px;" width="13" height="13" viewBox="0 0 13 13"><circle cx="6.500" cy="6.500" r="5.900" fill="#fff" stroke="#222" stroke-width="1.100"/><circle cx="6.500" cy="6.500" r="3.300" fill="#222"/></svg>
<span class="t" style="left:926.50px;top:485.25px;font-size:11.5px;line-height:11.5px;color:#111;letter-spacing:-0.736px;">Pixels</span>
<div class="a " style="left:975px;top:481px;width:121px;height:21px;background:#fff;border-top:2px solid #696969;border-left:2px solid #696969;border-bottom:1px solid #e3e3e3;border-right:1px solid #e3e3e3;"></div>
<div class="a " style="left:1080px;top:482px;width:15px;height:20px;background:#f1f1f1;border-top:1px solid #e3e3e3;border-left:1px solid #e3e3e3;border-bottom:2px solid #696969;border-right:2px solid #696969;"></div>
<svg class="a" style="left:1082.5px;top:488px;" width="9" height="6" viewBox="0 0 9 6"><path d="M.5 .5L4.500 5L8.500 .5" fill="none" stroke="#111" stroke-width="1.200"/></svg>
<div class="a " style="left:982px;top:491px;width:93px;height:2px;background:#000;"></div>
<svg class="a" style="left:911px;top:508px;" width="13" height="13" viewBox="0 0 13 13"><circle cx="6.500" cy="6.500" r="5.900" fill="#fff" stroke="#222" stroke-width="1.100"/></svg>
<span class="t" style="left:926.50px;top:509.25px;font-size:11.5px;line-height:11.5px;color:#111;letter-spacing:-0.692px;">Points</span>
<div class="a " style="left:976px;top:507px;width:120px;height:20px;background:#f7f7f7;border:1px solid #d2d2d2;"></div>
<div class="a " style="left:978px;top:509px;width:98px;height:16px;background:#e6e6e6;"></div>
<span class="t" style="left:981.50px;top:511.25px;font-size:11.5px;line-height:11.5px;color:#8a8a8a;letter-spacing:0.258px;">0,2</span>
<svg class="a" style="left:1083px;top:514px;" width="9" height="6" viewBox="0 0 9 6"><path d="M.5 .5L4.500 5L8.500 .5" fill="none" stroke="#c0c0c0" stroke-width="1.100"/></svg>
<div class="a " style="left:880px;top:554px;width:234px;height:65px;border:1px solid #dcdcdc;"></div>
<div class="a " style="left:886.5px;top:552px;width:38.5px;height:5px;background:#f0f0f0;"></div>
<span class="t" style="left:888.50px;top:549.25px;font-size:11.5px;line-height:11.5px;color:#111;letter-spacing:-0.900px;">Sample</span>
<svg class="a" style="left:917px;top:565px;" width="160" height="44" viewBox="0 0 160 44"><path d="M0 43V16.500L57.500 .5L159 27V43Z" fill="#9020ff"/></svg>
</body></html>
